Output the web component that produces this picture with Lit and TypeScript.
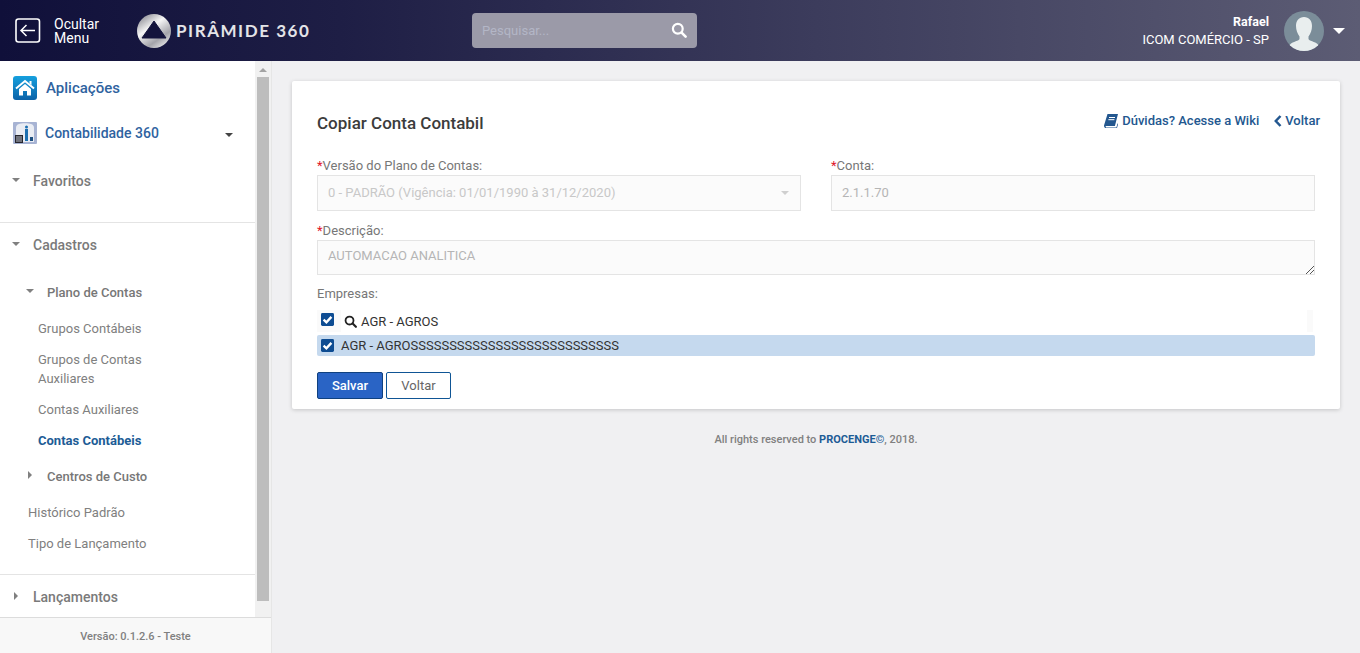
import { css, html, LitElement, svg } from "lit";
import { customElement } from "lit/decorators.js";

const searchIcon = (size: number, color: string) => svg`
  <svg width=${size} height=${size} viewBox="0 0 16 16" fill="none" stroke=${color}>
    <circle cx="6.8" cy="6.8" r="4.9" stroke-width="2.2" />
    <path d="M10.6 10.6 L14.6 14.6" stroke-width="2.6" stroke-linecap="round" />
  </svg>`;

const checkBox = svg`
  <svg width="13" height="13" viewBox="0 0 14 14">
    <rect width="14" height="14" rx="1.5" fill="#0d4c92" />
    <path d="M2.8 7.2 L5.8 10 L11.2 4.2" fill="none" stroke="#fff" stroke-width="2.6" />
  </svg>`;

@customElement("app-root")
export class AppRoot extends LitElement {
  render() {
    return html`
      <header class="topbar">
        <div class="hide-menu">
          <svg width="26" height="25" viewBox="0 0 26 25" fill="none" stroke="#fff">
            <rect x="1" y="1" width="23.5" height="23" rx="2.5" stroke-width="1.6" />
            <path d="M20 12.5 H6.5 M11.5 7 L6 12.5 L11.5 18" stroke-width="1.5" />
          </svg>
          <span>Ocultar<br />Menu</span>
        </div>
        <div class="logo">
          <svg width="34" height="34" viewBox="0 0 34 34">
            <defs>
              <linearGradient id="ring" x1="0.1" y1="0" x2="0.8" y2="1">
                <stop offset="0" stop-color="#7f7f88" />
                <stop offset="0.4" stop-color="#f6f6f6" />
                <stop offset="0.75" stop-color="#a4a4aa" />
                <stop offset="1" stop-color="#ececec" />
              </linearGradient>
            </defs>
            <circle cx="17" cy="17" r="17" fill="url(#ring)" />
            <path d="M17 7 L29 24 H5 Z" fill="#14143c" stroke="#14143c" stroke-width="1" stroke-linejoin="round" />
          </svg>
          <span class="brand">PIRÂMIDE 360</span>
        </div>
        <div class="search">
          <span>Pesquisar...</span>
          ${searchIcon(16, "#fff")}
        </div>
        <div class="user">
          <div class="user-text">
            <strong>Rafael</strong>
            <span>ICOM COMÉRCIO - SP</span>
          </div>
          <svg class="avatar" width="40" height="40" viewBox="0 0 40 40">
            <clipPath id="disc"><circle cx="20" cy="20" r="20" /></clipPath>
            <circle cx="20" cy="20" r="20" fill="#7b8d99" />
            <path
              clip-path="url(#disc)"
              fill="#e9eeee"
              d="M20 6c-5 0-8 3.500-8 9 0 4 1.500 8 3.500 10.500V28c0 1.500-7 3-9 5-1.500 1.500-2 3-2 7h31c0-4-.5-5.500-2-7-2-2-9-3.500-9-5v-2.500C26.500 23 28 19 28 15c0-5.500-3-9-8-9z"
            />
          </svg>
          <span class="user-caret"></span>
        </div>
      </header>

      <div class="body">
        <aside class="sidebar">
          <div class="side-main">
            <nav class="nav">
              <div class="app-row">
                <svg width="24" height="24" viewBox="0 0 24 24">
                  <defs>
                    <linearGradient id="home" x1="0" y1="0" x2="0" y2="1">
                      <stop offset="0" stop-color="#16a0de" />
                      <stop offset="1" stop-color="#0b62a8" />
                    </linearGradient>
                  </defs>
                  <rect width="24" height="24" rx="3" fill="url(#home)" />
                  <path d="M3 12.500 L12 5 L21 12.500" fill="none" stroke="#fff" stroke-width="2" />
                  <path d="M16.500 5h2v4l-2-1.500z M6 13l6-5 6 5v6.500h-4v-4.500h-4v4.500H6z" fill="#fff" />
                </svg>
                <span>Aplicações</span>
              </div>
              <div class="module-row">
                <svg width="24" height="22" viewBox="0 0 24 22">
                  <rect width="24" height="22" rx="1" fill="#a7b3d3" />
                  <path d="M6 2c2-1 10-1 12 0 2 .5 3 2 3 4v14H3V6c0-2 1-3.500 3-4z" fill="#e9ecf3" />
                  <rect x="2" y="13" width="8" height="8" fill="#26262e" />
                  <path d="M3 15h6M3 17h6M3 19h6" stroke="#cdd2de" stroke-width="0.900" />
                  <rect x="12" y="7" width="3" height="12" fill="#1d6fb0" />
                  <circle cx="13.500" cy="5" r="1.500" fill="#1d6fb0" />
                  <rect x="17" y="15" width="3" height="4" fill="#1d4f80" />
                </svg>
                <span>Contabilidade 360</span>
                <i class="caret down dark"></i>
              </div>
              <div class="group favorites"><i class="caret down"></i>Favoritos</div>
              <hr />
              <div class="group cadastros"><i class="caret down"></i>Cadastros</div>
              <div class="sub plano"><i class="caret down"></i>Plano de Contas</div>
              <a class="leaf">Grupos Contábeis</a>
              <a class="leaf two-line">Grupos de Contas<br />Auxiliares</a>
              <a class="leaf">Contas Auxiliares</a>
              <a class="leaf active">Contas Contábeis</a>
              <div class="sub centros"><i class="caret right"></i>Centros de Custo</div>
              <a class="leaf top-level">Histórico Padrão</a>
              <a class="leaf top-level">Tipo de Lançamento</a>
              <hr class="last" />
              <div class="group"><i class="caret right"></i>Lançamentos</div>
            </nav>
            <div class="scrollbar">
              <i class="scroll-up"></i>
              <div class="thumb"></div>
            </div>
          </div>
          <div class="version">Versão: 0.1.2.6 - Teste</div>
        </aside>

        <main class="main">
          <section class="card">
            <div class="card-head">
              <h1>Copiar Conta Contabil</h1>
              <div class="links">
                <a>
                  <svg width="14" height="14" viewBox="0 0 14 14">
                    <path
                      fill="#23578f"
                      d="M3.500 0H14l-.4 1.500-2.700 10.500H2.800c-.8 0-1.300.3-1.300.8s.5.700 1.300.7h9.600l1.200-4.500.4 1.500-1.300 4.500H2.500C1 14 0 13.300 0 12c0-.6.100-1 .3-1.600z"
                    />
                    <path d="M5 3.500h6M4.400 5.700h6" stroke="#fff" stroke-width="1" />
                  </svg>
                  Dúvidas? Acesse a Wiki
                </a>
                <a class="back">
                  <svg width="8" height="12" viewBox="0 0 8 12" fill="none" stroke="#23578f">
                    <path d="M6.500 1 L1.800 6 L6.500 11" stroke-width="2.500" />
                  </svg>
                  Voltar
                </a>
              </div>
            </div>

            <div class="two-cols">
              <div class="field">
                <label><b>*</b>Versão do Plano de Contas:</label>
                <div class="input select">
                  <span>0 - PADRÃO (Vigência: 01/01/1990 à 31/12/2020)</span>
                  <i class="caret down faint"></i>
                </div>
              </div>
              <div class="field">
                <label><b>*</b>Conta:</label>
                <div class="input">2.1.1.70</div>
              </div>
            </div>

            <div class="field descr">
              <label><b>*</b>Descrição:</label>
              <div class="input area">
                AUTOMACAO ANALITICA
                <svg class="grip" width="9" height="9" viewBox="0 0 9 9" stroke="#555" stroke-width="1">
                  <path d="M1 9 L9 1 M5 9 L9 5" />
                </svg>
              </div>
            </div>

            <div class="companies">
              <label>Empresas:</label>
              <div class="filter-row">
                <span class="check">${checkBox}</span>
                <div class="filter">
                  ${searchIcon(13, "#222")}
                  <span>AGR - AGROS</span>
                </div>
              </div>
              <div class="selected-row">
                <span class="check">${checkBox}</span>
                <span>AGR - AGROSSSSSSSSSSSSSSSSSSSSSSSSSSS</span>
              </div>
            </div>

            <div class="actions">
              <button class="primary">Salvar</button>
              <button class="outline">Voltar</button>
            </div>
          </section>
          <p class="rights">All rights reserved to <b>PROCENGE©</b>, 2018.</p>
        </main>
      </div>
    `;
  }

  static styles = css`
    :host {
      display: flex;
      flex-direction: column;
      height: 653px;
      overflow: hidden;
      font-family: Roboto, "Liberation Sans", sans-serif;
      font-size: 13px;
      color: #777;
      background: #f0f0f2;
    }
    .topbar {
      flex: none;
      height: 61px;
      display: flex;
      align-items: center;
      color: #fff;
      background: linear-gradient(90deg, #10103a 0%, #1e1e45 25%, #3c3c5c 60%, #5c5c74 100%);
    }
    .hide-menu {
      display: flex;
      align-items: center;
      gap: 13px;
      padding-left: 15px;
      width: 137px;
      box-sizing: border-box;
      font-size: 14px;
      line-height: 14px;
    }
    .logo {
      display: flex;
      align-items: center;
      gap: 5px;
      width: 335px;
    }
    .brand {
      font-family: Lato, sans-serif;
      font-size: 17px;
      font-weight: 700;
      letter-spacing: 1.55px;
      color: #e4e4e8;
      white-space: nowrap;
    }
    .search {
      width: 225px;
      height: 35px;
      box-sizing: border-box;
      padding: 0 10px;
      display: flex;
      align-items: center;
      justify-content: space-between;
      border-radius: 4px;
      background: #9b9aa8;
      color: #b3b6c6;
      margin-top: -1px;
    }
    .user {
      margin-left: auto;
      display: flex;
      align-items: center;
    }
    .user-text {
      display: flex;
      flex-direction: column;
      align-items: flex-end;
      gap: 4px;
      line-height: 14px;
      font-size: 13px;
      margin-right: 15px;
    }
    .user-text strong {
      font-size: 12.500px;
      font-weight: 700;
    }
    .avatar {
      display: block;
    }
    .user-caret {
      width: 0;
      height: 0;
      margin: 0 15px 0 9px;
      border-left: 6.500px solid transparent;
      border-right: 6.500px solid transparent;
      border-top: 6.500px solid #fff;
    }

    .body {
      flex: 1;
      min-height: 0;
      display: flex;
    }
    .sidebar {
      flex: none;
      width: 271px;
      display: flex;
      flex-direction: column;
      border-right: 1px solid #e6e6e6;
    }
    .side-main {
      height: 556px;
      display: flex;
      overflow: hidden;
    }
    .nav {
      width: 255px;
      flex: none;
      background: #fff;
      overflow: hidden;
    }
    .scrollbar {
      flex: 1;
      background: #f1f1f1;
      display: flex;
      flex-direction: column;
      align-items: center;
      padding-top: 7px;
    }
    .scroll-up {
      width: 0;
      height: 0;
      border-left: 4px solid transparent;
      border-right: 4px solid transparent;
      border-bottom: 4px solid #a3a3a3;
    }
    .thumb {
      width: 12px;
      height: 524px;
      margin-top: 5px;
      background: #bdbdbd;
    }
    .app-row {
      height: 54px;
      display: flex;
      align-items: center;
      gap: 9px;
      padding-left: 13px;
      font-size: 15px;
      font-weight: 500;
      color: #2f639f;
    }
    .module-row {
      height: 36px;
      display: flex;
      align-items: center;
      padding: 0 22px 0 13px;
      font-size: 14px;
      font-weight: 500;
      color: #2f639f;
    }
    .module-row svg {
      margin-right: 8px;
    }
    .module-row span {
      flex: 1;
      margin-top: -1px;
    }
    .module-row .caret {
      margin-top: 4px;
    }
    .caret {
      display: inline-block;
      width: 0;
      height: 0;
      flex: none;
    }
    .caret.down {
      border-left: 4.500px solid transparent;
      border-right: 4.500px solid transparent;
      border-top: 4.500px solid #808080;
    }
    .caret.right {
      border-top: 4.500px solid transparent;
      border-bottom: 4.500px solid transparent;
      border-left: 4.500px solid #808080;
    }
    .caret.dark {
      border-top-color: #444;
    }
    .caret.faint {
      border-top-color: #cfcfcf;
    }
    .group {
      height: 44px;
      display: flex;
      align-items: center;
      padding-left: 12px;
      font-size: 14px;
      font-weight: 500;
      color: #7a7a7a;
    }
    .group .caret {
      margin-right: 13px;
      margin-top: -3px;
    }
    .group .caret.right {
      margin-right: 15px;
      margin-left: 2px;
    }
    .favorites {
      margin-top: 8px;
    }
    hr {
      margin: 19px 0 0;
      border: none;
      border-top: 1px solid #e4e4e4;
    }
    hr.last {
      margin-top: 15px;
    }
    .sub {
      height: 36px;
      display: flex;
      align-items: center;
      padding-left: 26px;
      font-size: 13px;
      font-weight: 500;
      color: #777;
    }
    .sub .caret {
      margin-right: 13px;
      margin-top: -3px;
    }
    .sub .caret.right {
      margin-left: 2px;
      margin-right: 15px;
    }
    .plano {
      margin-top: 7px;
      margin-bottom: 3px;
    }
    .centros {
      margin-top: 2px;
      margin-bottom: 3px;
    }
    .leaf {
      display: block;
      padding: 6px 0 6px 38px;
      line-height: 19px;
      color: #808080;
    }
    .leaf.active {
      color: #1d5c96;
      font-weight: 700;
    }
    .leaf.top-level {
      padding-left: 28px;
    }
    .version {
      flex: 1;
      display: flex;
      align-items: center;
      justify-content: center;
      padding-top: 2px;
      background: #f8f8f8;
      border-top: 1px solid #dcdcdc;
      font-size: 11px;
      font-weight: 500;
      color: #808080;
    }

    .main {
      flex: 1;
      min-width: 0;
      padding: 20px 20px 0;
    }
    .card {
      height: 328px;
      box-sizing: border-box;
      padding: 0 25px;
      background: #fff;
      border-radius: 2px;
      box-shadow: 0 1px 4px rgba(0, 0, 0, 0.18);
    }
    .card-head {
      height: 76px;
      display: flex;
      justify-content: space-between;
      margin-right: -5px;
    }
    h1 {
      margin: 32px 0 0;
      font-size: 17px;
      line-height: 20px;
      font-weight: 500;
      color: #3c3c3c;
    }
    .links {
      display: flex;
      gap: 15px;
      padding-top: 32px;
      color: #23578f;
      font-weight: 500;
      line-height: 16px;
    }
    .links a {
      display: flex;
      align-items: center;
      gap: 4px;
      height: 16px;
    }
    .links a.back {
      gap: 3px;
    }
    .two-cols {
      display: grid;
      grid-template-columns: 484px 484px;
      column-gap: 30px;
    }
    .field label,
    .companies label {
      display: block;
      line-height: 18px;
      color: #777;
    }
    label b {
      font-weight: 400;
      color: #e0162b;
    }
    .input {
      height: 36px;
      box-sizing: border-box;
      padding: 0 10px 2px;
      display: flex;
      align-items: center;
      justify-content: space-between;
      background: #fbfbfb;
      border: 1px solid #e4e4e4;
      color: #b5b5b5;
      font-size: 13px;
    }
    .select span {
      color: #c8c8c8;
    }
    .select .caret {
      margin-right: 1px;
      margin-top: 2px;
    }
    .descr {
      margin-top: 11px;
    }
    .area {
      position: relative;
      height: 35px;
      padding-bottom: 5px;
    }
    .grip {
      position: absolute;
      right: 0;
      bottom: 0;
    }
    .companies {
      margin-top: 10px;
    }
    .filter-row {
      display: flex;
      align-items: center;
      height: 22px;
      margin-top: 7px;
      background: #fafafa;
      padding-left: 4px;
      margin-right: 2px;
    }
    .check {
      display: flex;
      flex: none;
    }
    .filter-row .check {
      margin-top: -3px;
    }
    .filter {
      flex: 1;
      align-self: stretch;
      display: flex;
      align-items: center;
      gap: 4px;
      margin: 0 6px 0 7px;
      padding-left: 3px;
      background: #fff;
      color: #333;
    }
    .selected-row {
      display: flex;
      align-items: center;
      gap: 7px;
      height: 21px;
      margin-top: 3px;
      padding-left: 4px;
      background: #c5d9ee;
      border-radius: 2px;
      color: #333;
    }
    .actions {
      display: flex;
      gap: 3px;
      margin-top: 16px;
    }
    button {
      height: 27px;
      box-sizing: border-box;
      font: inherit;
      border-radius: 2px;
      padding: 0;
    }
    .primary {
      width: 66px;
      background: #2a64c5;
      border: 1px solid #10417f;
      color: #fff;
      font-weight: 500;
    }
    .outline {
      width: 65px;
      background: #fff;
      border: 1px solid #0f5595;
      color: #666;
    }
    .rights {
      margin: 24px 0 0;
      text-align: center;
      font-size: 11px;
      font-weight: 500;
      line-height: 14px;
      color: #808080;
    }
    .rights b {
      color: #1d5c96;
      font-weight: 700;
    }
  `;
}
